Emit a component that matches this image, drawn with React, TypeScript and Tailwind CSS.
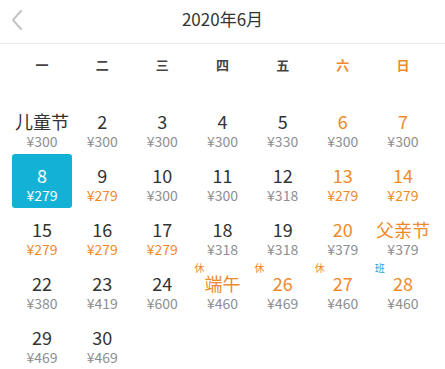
const ORANGE = 'text-[#f0892a]';

type Day = {
  label: string;
  price: number;
  hot?: boolean; // orange date
  cheap?: boolean; // orange price
  tag?: '休' | '班';
};

const days: Day[] = [
  { label: '儿童节', price: 300 },
  { label: '2', price: 300 },
  { label: '3', price: 300 },
  { label: '4', price: 300 },
  { label: '5', price: 330 },
  { label: '6', price: 300, hot: true },
  { label: '7', price: 300, hot: true },
  { label: '8', price: 279 },
  { label: '9', price: 279, cheap: true },
  { label: '10', price: 300 },
  { label: '11', price: 300 },
  { label: '12', price: 318 },
  { label: '13', price: 279, hot: true, cheap: true },
  { label: '14', price: 279, hot: true, cheap: true },
  { label: '15', price: 279, cheap: true },
  { label: '16', price: 279, cheap: true },
  { label: '17', price: 279, cheap: true },
  { label: '18', price: 318 },
  { label: '19', price: 318 },
  { label: '20', price: 379, hot: true },
  { label: '父亲节', price: 379, hot: true },
  { label: '22', price: 380 },
  { label: '23', price: 419 },
  { label: '24', price: 600 },
  { label: '端午', price: 460, hot: true, tag: '休' },
  { label: '26', price: 469, hot: true, tag: '休' },
  { label: '27', price: 460, hot: true, tag: '休' },
  { label: '28', price: 460, hot: true, tag: '班' },
  { label: '29', price: 469 },
  { label: '30', price: 469 },
];

const weekdays = ['一', '二', '三', '四', '五', '六', '日'];

export default function App() {
  return (
    <div className="w-[445px] h-[369px] bg-white overflow-hidden font-['Noto_Sans_CJK_SC','Noto_Sans',sans-serif] text-[#333]">
      {/* Header */}
      <div className="relative h-[44px] border-b border-[#e8e8e8] flex items-center justify-center pb-[5px]">
        <svg className="absolute left-[10px] top-[9px]" width="14" height="22" viewBox="0 0 14 22" fill="none">
          <path d="M11 2 L3 11 L11 20" stroke="#c4c4c4" strokeWidth="2" strokeLinecap="round" strokeLinejoin="round" />
        </svg>
        <span className="text-[17px] leading-[22px]">2020年6月</span>
      </div>

      {/* Weekdays */}
      <div className="grid grid-cols-7 px-3 h-[42px] items-center text-[13px] font-semibold">
        {weekdays.map((w, i) => (
          <div key={w} className={`text-center ${i >= 5 ? ORANGE : 'text-[#444]'}`}>
            {w}
          </div>
        ))}
      </div>

      {/* Days */}
      <div className="grid grid-cols-7 px-3 mt-[14px]">
        {days.map((d) => {
          const selected = d.label === '8';
          return (
            <div
              key={d.label}
              className={`relative h-[54px] flex flex-col items-center pt-[10px] rounded-[3px] ${
                selected ? 'bg-[#14b1d6] text-white' : ''
              }`}
            >
              {d.tag && (
                <span
                  className={`absolute left-[2px] top-[1px] text-[10px] leading-[10px] ${
                    d.tag === '班' ? 'text-[#1aa3d2]' : ORANGE
                  }`}
                >
                  {d.tag}
                </span>
              )}
              <span
                className={`text-[18px] leading-[22px] ${
                  selected ? 'text-white' : d.hot ? ORANGE : 'text-[#333]'
                }`}
              >
                {d.label}
              </span>
              <span
                className={`text-[14px] leading-[18px] ${
                  selected ? 'text-white' : d.cheap ? ORANGE : 'text-[#8e8e8e]'
                }`}
              >
                ¥{d.price}
              </span>
            </div>
          );
        })}
      </div>
    </div>
  );
}
